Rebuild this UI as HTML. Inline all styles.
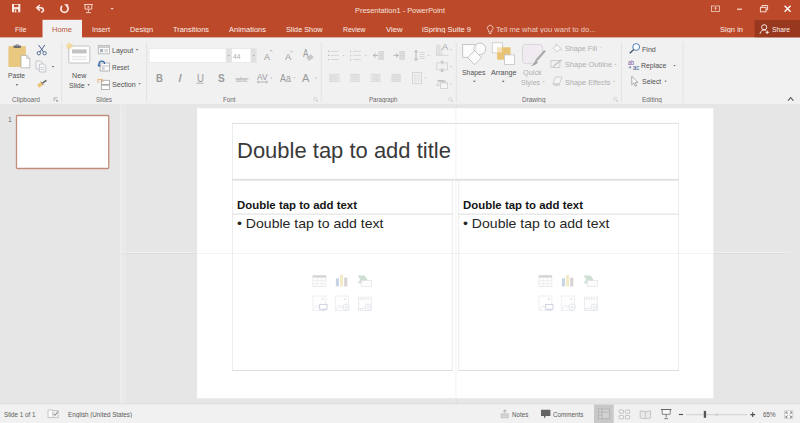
<!DOCTYPE html>
<html lang="en"><head><meta charset="utf-8"><title>Presentation1 - PowerPoint</title>
<style>
html,body{margin:0;padding:0}
body{width:800px;height:423px;overflow:hidden;position:relative;background:#e6e6e6;font-family:"Liberation Sans",sans-serif}
.t{position:absolute;white-space:nowrap;transform-origin:0 0;display:block}
.a{position:absolute}
svg{position:absolute;overflow:visible}

</style></head>
<body>
<svg id="bg" width="800" height="423" viewBox="0 0 800 423" style="left:0;top:0">
<rect x="0" y="0" width="800" height="423" fill="#e6e6e6"/>
<!-- title bar + tabs -->
<rect x="0" y="0" width="800" height="37.6" fill="#bc492a"/>
<rect x="754.6" y="20" width="45.4" height="17.6" fill="#98381f"/>
<!-- ribbon -->
<rect x="0" y="37.600" width="800" height="66.700" fill="#f1f1f1"/>
<rect x="0" y="103.900" width="800" height=".8" fill="#e4e4e4"/>
<rect x="42.5" y="19.8" width="39.5" height="18.4" fill="#f1f1f1"/>
<!-- group separators -->
<g fill="#e3e3e3">
<rect x="61.2" y="42" width="1" height="60"/><rect x="146.1" y="42" width="1" height="60"/><rect x="320.8" y="42" width="1" height="60"/>
<rect x="455.8" y="42" width="1" height="60"/><rect x="620.9" y="42" width="1" height="60"/><rect x="682.4" y="42" width="1" height="60"/>
</g>
<!-- font boxes -->
<rect x="149" y="48.4" width="77.2" height="14.1" fill="#fff" stroke="#e7e7e7" stroke-width=".8"/>
<rect x="231.6" y="48.4" width="19.3" height="14.1" fill="#fff" stroke="#e7e7e7" stroke-width=".8"/>
<!-- pane splitter -->
<rect x="120.4" y="104.4" width="5.8" height="300" fill="#e9e9e9"/>
<rect x="120.4" y="104.4" width="1" height="300" fill="#f0f0f0"/>
<!-- thumbnail -->
<rect x="16.5" y="115.5" width="92.2" height="53" rx=".8" fill="#fff" stroke="#c48d7b" stroke-width="1.3"/>
<!-- slide -->
<rect x="197.100" y="108.200" width="516.200" height="290" fill="#fff"/>
<!-- placeholders -->
<g fill="none" stroke="#ececec" stroke-width="1">
<path d="M232.500 123.400v247.100M678.500 123.400v247.100M452.300 180.100v190.400M458.700 180.100v190.400"/>
</g>
<g fill="none" stroke="#dedede" stroke-width="1">
<path d="M232 123.400h447M232 179.300h447M232 180.200h447M232 214.100h220.800M458.200 214.100h220.800M232 370.500h220.800M458.200 370.500h220.800"/>
</g>
<!-- guides -->
<rect x="121" y="252.3" width="669" height=".9" fill="#fff" opacity=".45"/>
<rect x="121" y="253.100" width="669" height=".9" fill="#5a5a5a" opacity=".08"/>
<rect x="454.700" y="104.4" width=".9" height="300" fill="#fff" opacity=".45"/>
<rect x="455.500" y="104.4" width=".9" height="300" fill="#5a5a5a" opacity=".08"/>
<!-- status bar -->
<rect x="0" y="403.500" width="800" height="1" fill="#dcdcdc"/>
<rect x="0" y="404.400" width="800" height="18.600" fill="#f1f1f1"/>
</svg>
<svg id="ico" width="800" height="423" viewBox="0 0 800 423" style="left:0;top:0" fill="none">
<!-- clipboard group -->
<g id="clip">
<rect x="8.4" y="46" width="17.4" height="21" rx="1" fill="#e9c880"/>
<path d="M13.600 48v-2.400h1.800a1.900 1.900 0 0 1 3.600 0h1.800v2.400z" fill="#6e6e6e"/>
<circle cx="17.200" cy="45.100" r=".700" fill="#f1f1f1"/>
<path d="M21 55.4h5.8l3 3v9.4h-8.8z" fill="#fff" stroke="#a9a9a9" stroke-width=".7"/>
<path d="M26.8 55.4v3h3" stroke="#a9a9a9" stroke-width=".7"/>
<!-- paste dd -->
<path d="M15.6 84.3l1.4 1.5l1.4-1.5z" fill="#555"/>
<!-- scissors -->
<path d="M38.6 45l5 7M44.8 45l-5 7" stroke="#4a6591" stroke-width="1"/>
<circle cx="38.8" cy="53.2" r="1.7" stroke="#4a6591" stroke-width=".9"/>
<circle cx="44.6" cy="53.2" r="1.7" stroke="#4a6591" stroke-width=".9"/>
<!-- copy (disabled) -->
<path d="M36 61h4.6l2 2v6h-6.600z" fill="#f6f6f6" stroke="#b9bec6" stroke-width=".8"/>
<path d="M39.4 64h4.400l2 2v6h-6.400z" fill="#f6f6f6" stroke="#b9bec6" stroke-width=".8"/>
<path d="M40.600 67.500h3.800M40.600 69.500h3.800" stroke="#c3c8cf" stroke-width=".7"/>
<path d="M51.800 66l1.300 1.400l1.300-1.400z" fill="#666"/>
<!-- format painter -->
<path d="M37 84.800l4.200-3l2.200 3l-4.200 3z" fill="#ecc777"/>
<path d="M42.600 83l3.800-2.600" stroke="#5a5a5a" stroke-width="1.500"/>
<path d="M41 81.600l2.400 3.400" stroke="#77705f" stroke-width=".9"/>
<!-- dialog launcher -->
<path d="M54 97.800h3.300M54 97.800v3.300" stroke="#8a8a8a" stroke-width=".6"/>
<path d="M55.600 99.400l1.900 1.900M57.500 99.900v1.400h-1.400" stroke="#7a7a7a" stroke-width=".6"/>
</g>
<!-- slides group -->
<g id="slides">
<rect x="68.800" y="46" width="21" height="17" rx="1.200" fill="#fdfdfd" stroke="#bdbdbd" stroke-width=".9"/>
<rect x="72" y="49.400" width="14.600" height="4" fill="#c2c2c2"/>
<path d="M72 56.800h14.600M72 59.400h14.600" stroke="#dedede" stroke-width=".9"/>
<path d="M69.400 42.400v7.200M65.800 46h7.200M66.900 43.500l5 5M71.900 43.500l-5 5" stroke="#f0c661" stroke-width=".8"/>
<circle cx="69.400" cy="46" r="1.500" fill="#f7dc93"/>
<path d="M87.300 84.300l1.300 1.400l1.300-1.400z" fill="#555"/>
<!-- layout -->
<rect x="98.300" y="45.400" width="11.200" height="8.400" fill="#fbfbfb" stroke="#b2b2b2" stroke-width=".8"/>
<path d="M98.300 47.100h11.200" stroke="#bcbcbc" stroke-width="1.400"/>
<rect x="100" y="49" width="3" height="3.200" fill="#aab3c0"/>
<rect x="104.400" y="49" width="3.600" height="3.200" fill="#d8d8d8"/>
<path d="M135.800 49l1.300 1.400l1.300-1.400z" fill="#666"/>
<!-- reset -->
<rect x="100.200" y="63" width="9.300" height="8" fill="#fbfbfb" stroke="#a5a5a5" stroke-width=".8"/>
<path d="M100.200 66h9.300" stroke="#b5b5b5" stroke-width=".8"/>
<rect x="102" y="67.200" width="2.600" height="2.600" fill="#c5ccd6"/>
<path d="M99 66.500v-2.500a2.800 2.800 0 0 1 5.600 0" stroke="#3f6fae" stroke-width="1.300"/>
<path d="M97.300 64.800l1.700 2.300l1.700-2.300z" fill="#3f6fae"/>
<!-- section -->
<rect x="101.500" y="80.300" width="8" height="9.200" fill="#fdfdfd" stroke="#a5a5a5" stroke-width=".8"/>
<path d="M101.500 84.800h8" stroke="#a8a8a8" stroke-width="1.600"/>
<path d="M98 79.400h5M98 79.400v3.600M100.500 81.300h3" stroke="#e6a45c" stroke-width=".8"/>
<path d="M138.300 83.200l1.300 1.400l1.300-1.400z" fill="#666"/>
</g>
<!-- drawing group -->
<g id="drawg">
<rect x="462.700" y="44.400" width="13.200" height="12.900" fill="#fcfcfc" stroke="#b9b9b9" stroke-width=".8"/>
<circle cx="479.800" cy="48.900" r="5.900" fill="#fcfcfc" stroke="#b9b9b9" stroke-width=".8"/>
<path d="M475.900 44.400v8" stroke="#d4d4d4" stroke-width=".7"/>
<path d="M474.600 50.600l7 7l-7 7l-7-7z" fill="#fcfcfc" stroke="#b9b9b9" stroke-width=".8"/>
<rect x="492.300" y="42.800" width="10.100" height="10" fill="#fcfcfc" stroke="#c4c4c4" stroke-width=".8"/>
<rect x="497.100" y="47.300" width="13.400" height="12.400" fill="#e8c373"/>
<rect x="492.700" y="43.200" width="9.300" height="9.200" fill="#fcfcfc" opacity=".55"/>
<rect x="504.500" y="54.900" width="10" height="9.600" fill="#fcfcfc" stroke="#c4c4c4" stroke-width=".8"/>
<!-- quick styles -->
<path d="M524.500 44.400h14.500a3.600 3.600 0 0 1 3.600 3.600v6l-7.500 9.700h-9a3.600 3.600 0 0 1-3.600-3.600v-12.100a3.600 3.600 0 0 1 2-3.600z" fill="#efebf0" stroke="#d2d0d4" stroke-width=".8"/>
<path d="M536.200 60.600l8.800-9.900" stroke="#ababab" stroke-width="2.200"/>
<path d="M529.800 65.800c2.600-.2 3.800-1.600 5.600-5.600l2.600 2c-2.600 3-5 4-8.200 3.600z" fill="#a2a2a2"/>
<path d="M473 80.800l1.300 1.400l1.300-1.400zM501.900 80.800l1.300 1.400l1.300-1.400z" fill="#555"/>
<path d="M542.600 81.200l1.100 1.200l1.100-1.200z" fill="#b5b5b5"/>
<!-- shape fill bucket -->
<g stroke="#c6c6c6" stroke-width=".8">
<path d="M553.200 48.200l4-3.500l3.600 3.800l-4 3.500z" fill="#f8f8f8"/>
<path d="M556 46v-2.200M561 48.800c.8 1.200.8 2 0 2.400"/>
<!-- shape outline -->
<rect x="550.900" y="60.400" width="9" height="7" fill="none"/>
<path d="M553 66.600l8.600-6.800" stroke="#bdbdbd" stroke-width="1.100"/>
<!-- shape effects -->
<path d="M555.500 77h6.500l-2.500 6.500h-6.500z" fill="#f4f4f4"/>
<path d="M553 83.500c.5 1.500 1 1.800 2 1.800h3.500c1 0 1.500-.8 1-1.800" fill="#d5d5d5"/>
</g>
<path d="M599.400 47.400l1.100 1.200l1.100-1.200zM614.600 64l1.100 1.200l1.100-1.200zM612.900 81l1.100 1.200l1.100-1.200z" fill="#c0c0c0"/>
<path d="M614 97.800h3.300M614 97.800v3.300" stroke="#c6c6c6" stroke-width=".6"/>
<path d="M615.600 99.400l1.900 1.900M617.500 99.900v1.400h-1.400" stroke="#c2c2c2" stroke-width=".6"/>
</g>
<!-- editing group -->
<g id="editg">
<circle cx="636.200" cy="47" r="3.400" fill="#fafcff" stroke="#4f7fb8" stroke-width="1"/>
<path d="M633.700 49.600l-3.900 3.600" stroke="#45566e" stroke-width="1.400"/>
<path d="M628.600 67.300h2.400M629.800 66.100l1.300 1.200l-1.300 1.200" stroke="#46679a" stroke-width=".6"/>
<path d="M631.800 76.200v8.600l2-1.900l1.500 3.500l1.300-.6l-1.500-3.400h2.800z" fill="#fff" stroke="#8a8a8a" stroke-width=".7"/>
<path d="M673.400 65l1.100 1.200l1.100-1.200zM664.500 80.800l1.100 1.200l1.100-1.200z" fill="#555"/>
<!-- collapse ribbon -->
<path d="M788 100.600l2.700-2.900l2.700 2.900" stroke="#5c5c5c" stroke-width="1.200"/>
</g>
<!-- font group -->
<g id="fontg">
<rect x="226.200" y="48.300" width="5.300" height="14.300" fill="#e2e2e2"/>
<rect x="250.900" y="48.300" width="5.700" height="14.300" fill="#e0e0e0"/>
<path d="M227.700 55l1.100 1.200l1.100-1.200zM252.600 55l1.100 1.200l1.100-1.200z" fill="#a4a4a4"/>
<!-- grow/shrink carets -->
<path d="M270 51.400l1.200-1.100l1.200 1.100" stroke="#9a9a9a" stroke-width=".7"/>
<path d="M290.400 51l1.100 1.100l1.100-1.100" stroke="#9a9a9a" stroke-width=".7"/>
<!-- eraser -->
<path d="M306.300 57.800l4.800-3.600l2.800 3l-4.800 3.800z" fill="#c9c9c9"/>
<!-- underline of U -->
<path d="M196.500 83.200h7" stroke="#a2a2a2" stroke-width=".8"/>
<!-- abc strike -->
<path d="M235 79.100h13.600" stroke="#b4b4b4" stroke-width=".7"/>
<!-- AV arrow -->
<path d="M257.400 82h10M258.600 80.900l-1.300 1.100l1.300 1.100M266.200 80.900l1.300 1.100l-1.300 1.100" stroke="#9a9a9a" stroke-width=".7"/>
<path d="M270.300 77.500l1.100 1.200l1.100-1.200zM293.200 77.500l1.100 1.200l1.100-1.200zM315 77.500l1.100 1.200l1.100-1.200z" fill="#b0b0b0"/>
<path d="M314 97.800h3.300M314 97.800v3.300" stroke="#c2c2c2" stroke-width=".6"/>
<path d="M315.600 99.400l1.900 1.900M317.500 99.900v1.400h-1.400" stroke="#bcbcbc" stroke-width=".6"/>
</g>
<!-- paragraph group (disabled) -->
<g id="parag" stroke="#d2d2d2" stroke-width=".8">
<!-- bullets -->
<path d="M330.800 51.300h8M330.800 55.400h8M330.800 59.500h8"/>
<path d="M328 51.300h1.300M328 55.400h1.300M328 59.500h1.300" stroke="#b9b9b9" stroke-width="1.200"/>
<!-- numbering -->
<path d="M353 51.300h8M353 55.400h8M353 59.500h8"/>
<path d="M350.600 50.500v1.800M350.600 54.500v1.800M350.600 58.600v1.800" stroke="#bdbdbd" stroke-width=".9"/>
<!-- dec indent -->
<rect x="378.200" y="51" width="5.900" height="8.600" fill="#e0e0e0" stroke="none"/>
<path d="M378.600 51.600h5.300M378.600 53.500h5.300M378.600 55.400h5.300M378.600 57.300h5.300M378.600 59.200h5.300"/>
<path d="M377.800 55.400h-4.400M375.600 53.300l-2.300 2.100l2.300 2.100" stroke="#b5b5b5" stroke-width="1"/>
<!-- inc indent -->
<rect x="399.200" y="51" width="5.900" height="8.600" fill="#e0e0e0" stroke="none"/>
<path d="M399.600 51.600h5.300M399.600 53.500h5.300M399.600 55.400h5.300M399.600 57.300h5.300M399.600 59.200h5.300"/>
<path d="M393.600 55.400h4.600M396 53.300l2.300 2.100l-2.300 2.100" stroke="#b5b5b5" stroke-width="1"/>
<!-- line spacing -->
<path d="M419.600 52.500h5M419.600 54.500h5M419.600 56.500h5M419.600 58.500h5"/>
<path d="M416 50.500v9.800M414.300 52.300l1.700-1.900l1.700 1.900M414.300 58.500l1.700 1.900l1.700-1.900" stroke="#b3b3b3" stroke-width="1"/>
<!-- align L C R J -->
<rect x="329" y="74" width="10.600" height="7.800" fill="#e6e6e6" stroke="none"/><rect x="350" y="74" width="10" height="7.800" fill="#e6e6e6" stroke="none"/><rect x="370.400" y="74" width="10" height="7.800" fill="#e6e6e6" stroke="none"/><rect x="391.400" y="74" width="9.500" height="7.800" fill="#e4e4e4" stroke="none"/>
<path d="M329 74.400h10.600M329 76.200h7.600M329 78h10.600M329 79.800h7.600M329 81.500h10.600" stroke="#d8d8d8"/>
<path d="M350 74.400h10M351.400 76.200h7.200M350 78h10M351.400 79.800h7.200M350 81.500h10" stroke="#d8d8d8"/>
<path d="M370.400 74.400h10M373.400 76.200h7M370.400 78h10M373.400 79.800h7M370.400 81.500h10" stroke="#d8d8d8"/>
<path d="M391.400 74.400h9.500M391.400 76.200h9.500M391.400 78h9.500M391.400 79.800h9.500M391.400 81.500h9.500" stroke="#d8d8d8"/>
<!-- columns -->
<rect x="412.600" y="72.400" width="8.800" height="11.300" stroke="#cfcfcf"/>
<path d="M414.200 75h2.300M417.600 75h2.300M414.200 77h2.300M417.600 77h2.300M414.200 79h2.300M417.600 79h2.300M414.200 81h2.300M417.600 81h2.300" stroke="#d6d6d6"/>
<!-- text direction -->
<path d="M436.600 44.500v10.600M438.200 44.500v10.600M439.800 44.500v10.600M441.400 48v7.100M436 55.300h12.600" stroke="#cfcfcf"/>
<!-- align text -->
<rect x="436.800" y="62.800" width="10.600" height="7" stroke="#cfcfcf"/>
<path d="M442.100 61v3.400M442.100 68.200v3.600M440.600 62.400l1.500-1.600l1.500 1.600M440.600 70.400l1.500 1.600l1.500-1.600" stroke="#b8b8b8" stroke-width=".9"/>
<!-- smartart convert -->
<path d="M436.600 80h7.500l2.600 2.300h-7.500z" fill="#c5c5c5" stroke="none"/>
<path d="M438.500 82.300l-1.900 3h4" stroke="#c9c9c9"/>
<rect x="440.600" y="83" width="7" height="5.400" fill="#f6f6f6" stroke="#cdcdcd"/>
<!-- dds -->
<path d="M342.500 55l1.100 1.200l1.100-1.200zM364.800 55l1.100 1.200l1.100-1.200zM427.400 55l1.100 1.200l1.100-1.200zM424.400 77.500l1.100 1.200l1.100-1.200zM450 49l1.100 1.200l1.100-1.200zM450 66l1.100 1.200l1.100-1.200zM450 83.500l1.100 1.200l1.100-1.200z" fill="#c4c4c4" stroke="none"/>
<path d="M449 97.800h3.300M449 97.800v3.300" stroke="#c6c6c6" stroke-width=".6"/>
<path d="M450.600 99.400l1.900 1.900M452.500 99.900v1.400h-1.400" stroke="#c2c2c2" stroke-width=".6"/>
</g>
<!-- placeholder icons -->
<g transform="translate(0 0)" stroke-width=".7" opacity=".72">
<!-- table -->
<rect x="312.9" y="275.600" width="13" height="11" fill="#fdfdfd" stroke="#dcdcdc"/>
<rect x="312.900" y="275.400" width="13" height="2.200" fill="#c2c2c2"/>
<path d="M317.200 277.600v9M321.600 277.600v9M312.900 280.600h13M312.900 283.600h13" stroke="#e2e2e2"/>
<!-- chart -->
<rect x="335.900" y="278.400" width="3.100" height="8" fill="#b3c3da"/>
<rect x="340" y="274.800" width="3.100" height="11.600" fill="#efe2b4"/>
<rect x="344.200" y="277.600" width="3.100" height="8.800" fill="#c9c1c4"/>
<!-- smartart -->
<path d="M357.600 275.500h7l2.800 3.900l-2.800 3.900h-7l2.600-3.900z" fill="#bcd3c7"/>
<rect x="361.300" y="280.600" width="10" height="6" fill="#fcfcfc" stroke="#d6d6d6"/>
<!-- picture -->
<rect x="312.900" y="296" width="13" height="14.400" fill="#fefefe" stroke="#e0e0e4"/>
<rect x="321.800" y="298.300" width="1.800" height="1.600" fill="#d8d8de"/>
<path d="M313.400 309.500l3.600-4.200l2 2.200l1.800-1.800" stroke="#d3dae6" fill="none"/>
<rect x="319.600" y="304.400" width="7.400" height="4.800" fill="#fff" stroke="#b3bfd2" stroke-width=".9"/>
<path d="M321.800 310h3" stroke="#b3bfd2" stroke-width=".8"/>
<!-- online picture -->
<rect x="335.200" y="296" width="13.300" height="14.400" fill="#fefefe" stroke="#e0e0e4"/>
<rect x="344.300" y="298.300" width="1.800" height="1.600" fill="#d8d8de"/>
<path d="M335.800 309.800l3.400-4.600l2 2.400l2-2.200" stroke="#d9d3e4" fill="none"/>
<circle cx="346.200" cy="307.200" r="3.300" fill="#fff" stroke="#ccd3de"/>
<path d="M346.200 303.900v6.600M342.900 307.200h6.600" stroke="#d5dbe4" fill="none"/>
<!-- video -->
<rect x="358.500" y="297.200" width="12.800" height="13.200" fill="#fefefe" stroke="#dcdce0"/>
<path d="M359.600 299h10.800" stroke="#c5c5cc" stroke-width="1.200" stroke-dasharray="1.400 1.200"/>
<path d="M359.600 308.600h5" stroke="#c9c9d0" stroke-width="1.200" stroke-dasharray="1.400 1.200"/>
<circle cx="368" cy="307.200" r="3.300" fill="#fff" stroke="#ccd3de"/>
<path d="M368 303.900v6.600M364.700 307.200h6.600" stroke="#d5dbe4" fill="none"/>
</g>
<g transform="translate(226 0)" stroke-width=".7" opacity=".72">
<!-- table -->
<rect x="312.9" y="275.600" width="13" height="11" fill="#fdfdfd" stroke="#dcdcdc"/>
<rect x="312.900" y="275.400" width="13" height="2.200" fill="#c2c2c2"/>
<path d="M317.200 277.600v9M321.600 277.600v9M312.900 280.600h13M312.900 283.600h13" stroke="#e2e2e2"/>
<!-- chart -->
<rect x="335.900" y="278.400" width="3.100" height="8" fill="#b3c3da"/>
<rect x="340" y="274.800" width="3.100" height="11.600" fill="#efe2b4"/>
<rect x="344.200" y="277.600" width="3.100" height="8.800" fill="#c9c1c4"/>
<!-- smartart -->
<path d="M357.600 275.500h7l2.800 3.900l-2.800 3.900h-7l2.600-3.900z" fill="#bcd3c7"/>
<rect x="361.300" y="280.600" width="10" height="6" fill="#fcfcfc" stroke="#d6d6d6"/>
<!-- picture -->
<rect x="312.900" y="296" width="13" height="14.400" fill="#fefefe" stroke="#e0e0e4"/>
<rect x="321.800" y="298.300" width="1.800" height="1.600" fill="#d8d8de"/>
<path d="M313.400 309.500l3.600-4.200l2 2.200l1.800-1.800" stroke="#d3dae6" fill="none"/>
<rect x="319.600" y="304.400" width="7.400" height="4.800" fill="#fff" stroke="#b3bfd2" stroke-width=".9"/>
<path d="M321.800 310h3" stroke="#b3bfd2" stroke-width=".8"/>
<!-- online picture -->
<rect x="335.200" y="296" width="13.300" height="14.400" fill="#fefefe" stroke="#e0e0e4"/>
<rect x="344.300" y="298.300" width="1.800" height="1.600" fill="#d8d8de"/>
<path d="M335.800 309.800l3.400-4.600l2 2.400l2-2.200" stroke="#d9d3e4" fill="none"/>
<circle cx="346.200" cy="307.200" r="3.300" fill="#fff" stroke="#ccd3de"/>
<path d="M346.200 303.900v6.600M342.900 307.200h6.600" stroke="#d5dbe4" fill="none"/>
<!-- video -->
<rect x="358.500" y="297.200" width="12.800" height="13.200" fill="#fefefe" stroke="#dcdce0"/>
<path d="M359.600 299h10.800" stroke="#c5c5cc" stroke-width="1.200" stroke-dasharray="1.400 1.200"/>
<path d="M359.600 308.600h5" stroke="#c9c9d0" stroke-width="1.200" stroke-dasharray="1.400 1.200"/>
<circle cx="368" cy="307.200" r="3.300" fill="#fff" stroke="#ccd3de"/>
<path d="M368 303.900v6.600M364.700 307.200h6.600" stroke="#d5dbe4" fill="none"/>
</g>
<!-- status bar -->
<g id="statusg">
<rect x="594" y="404.500" width="19.700" height="18.500" fill="#c8c8c8"/>
<!-- spell check -->
<path d="M48 410h4.800v7.600h-4.800z" fill="#fafafa" stroke="#b5b5b5" stroke-width=".7"/>
<path d="M52.800 410.600h5.400v7h-5.400" stroke="#b5b5b5" stroke-width=".7"/>
<path d="M53.600 413.600l1.500 1.800l2.800-4" stroke="#777" stroke-width=".9"/>
<!-- notes -->
<rect x="500.800" y="413.200" width="8" height="5" fill="#c9c9c9"/>
<path d="M502.200 414.800h5.200M502.200 416.600h5.200" stroke="#e6e6e6" stroke-width=".6"/>
<path d="M504.800 412.800v-2.600M503.200 411.600l1.600-1.800l1.600 1.800" stroke="#a8a8a8" stroke-width=".9"/>
<!-- comments -->
<path d="M541 409.800h9.400v6.200h-4.400l-2 2.400v-2.400h-3z" fill="#646464"/>
<!-- normal view icon -->
<rect x="598.600" y="409" width="11" height="9.800" fill="#d2d2d2" stroke="#aeaeae" stroke-width=".8"/>
<path d="M602 409v9.800M602 412.200h7.600M598.600 412.200h3.400M598.600 415.400h3.400" stroke="#aeaeae" stroke-width=".7"/>
<!-- slide sorter -->
<g stroke="#b4b4b4" stroke-width=".8" fill="#f7f7f7">
<rect x="619.200" y="410" width="4.300" height="3.200" rx=".6"/><rect x="625.400" y="410" width="4.300" height="3.200" rx=".6"/>
<rect x="619.200" y="415.600" width="4.300" height="3.200" rx=".6"/><rect x="625.400" y="415.600" width="4.300" height="3.200" rx=".6"/>
</g>
<!-- reading view -->
<path d="M640.200 410.800l5.200 .8l5.200-.8v7.200l-5.200 .6l-5.200-.6z" fill="#e9e9e9" stroke="#bdbdbd" stroke-width=".8"/>
<path d="M645.400 411.400v7" stroke="#bdbdbd" stroke-width=".8"/>
<!-- slideshow -->
<path d="M661 409.600h10.400" stroke="#5e5e5e" stroke-width="1.100"/>
<path d="M662.200 410v4.300h8v-4.300" stroke="#6e6e6e" stroke-width=".8" fill="#f8f8f8"/>
<path d="M666.200 414.300v3M664.400 418.600h3.600" stroke="#6e6e6e" stroke-width=".9"/>
<!-- zoom slider -->
<path d="M678.900 414.500h4.200" stroke="#4c4c4c" stroke-width="1.100"/>
<path d="M686 414.700h61.500" stroke="#c2c2c2" stroke-width=".7"/>
<path d="M716.800 413.600v2.200" stroke="#b5b5b5" stroke-width=".8"/>
<rect x="703.800" y="410.900" width="2.300" height="6.900" fill="#555"/>
<path d="M750.300 414.600h4.800M752.700 412.200v4.800" stroke="#4c4c4c" stroke-width="1.100"/>
<!-- fit to window -->
<rect x="784.600" y="410.800" width="8.300" height="7.800" fill="#fafafa" stroke="#c4c4c4" stroke-width=".7"/>
<path d="M786 412.200l1.900 1.800M791.500 412.200l-1.900 1.800M786 417.200l1.900-1.800M791.500 417.200l-1.900-1.800" stroke="#6a6a6a" stroke-width=".8"/>
<path d="M785.800 413.600v-1.600h1.600M791.700 413.600v-1.600h-1.600M785.800 415.800v1.600h1.600M791.700 415.800v1.600h-1.600" stroke="#6a6a6a" stroke-width=".7"/>
</g>
<!-- titlebar: save -->
<g id="tb-icons">
<path d="M12 4h8.3v8.2h-8.3z" fill="#fbe9e3"/>
<rect x="14" y="4.700" width="4.300" height="2.400" fill="#bc492a"/>
<rect x="14.2" y="9.3" width="3.9" height="2.9" fill="#bc492a"/>
<rect x="15" y="9.9" width="1.2" height="2.3" fill="#fbe9e3"/>
<!-- undo -->
<path d="M37.400 7.800h3.400a3 2.300 0 0 1 .400 4.500" stroke="#fbe9e3" stroke-width="1.600"/>
<path d="M39.800 5l-3 2.800l3 2.800" stroke="#fbe9e3" stroke-width="1.600"/>
<!-- redo -->
<path d="M66.800 6a3.600 3.600 0 1 1-4.600 0" stroke="#fbe9e3" stroke-width="1.700"/>
<path d="M64.600 4.400h3.300v3.300z" fill="#fbe9e3" stroke="#fbe9e3" stroke-width=".5"/>
<!-- present from start -->
<path d="M84 4.5h8.8M85 4.5v4.6h6.8v-4.6M88.4 9.1v2.6M86 12.6h4.8" stroke="#f3d3c8" stroke-width="1"/>
<path d="M87.6 5.6l2.2 1.3l-2.2 1.3z" fill="#f3d3c8"/>
<!-- customize qat -->
<path d="M110.600 8l1.500 1.700l1.500-1.700z" fill="#f6ddd5"/>
<!-- ribbon display options -->
<rect x="711.5" y="6" width="8" height="5.4" stroke="#f0cfc4" stroke-width=".8"/>
<path d="M715.5 10.2v-2.8M714.2 8.6l1.3-1.4l1.3 1.4" stroke="#f0cfc4" stroke-width=".8"/>
<!-- minimize -->
<path d="M737 9.2h5" stroke="#fbe9e3" stroke-width="1.1"/>
<!-- restore -->
<rect x="760.4" y="7.4" width="5.6" height="4.4" stroke="#f6dcd3" stroke-width="1"/>
<path d="M762 7.2v-1.7h5.6v4.2h-1.5" stroke="#f6dcd3" stroke-width="1"/>
<!-- close -->
<path d="M784.6 5.8l6 6M790.6 5.8l-6 6" stroke="#fff" stroke-width="1.3"/>
<!-- lightbulb -->
<path d="M488.600 30.400a2.800 2.800 0 1 1 3.200 0v1.600h-3.200zM489 33.500h2.400" stroke="#f3d6cc" stroke-width=".8"/>
<!-- share person -->
<circle cx="764.2" cy="27.3" r="2.6" stroke="#fbe9e3" stroke-width="1"/>
<path d="M760 33.8a4.3 4.3 0 0 1 6-3.6" stroke="#fbe9e3" stroke-width="1"/>
<path d="M767.2 30.6v3.4M765.5 32.3h3.4" stroke="#fbe9e3" stroke-width="1"/>
</g>
</svg>

<span class="t" id="t0" style="left:354.5px;top:7px;font-size:28.8px;line-height:28.8px;color:#f6e3dd;transform:scale(0.2567,0.25);">Presentation1 - PowerPoint</span>
<span class="t" id="t1" style="left:14.5px;top:25px;font-size:30.4px;line-height:30.4px;color:#fbeee9;transform:scale(0.2348,0.25);">File</span>
<span class="t" id="t2" style="left:52px;top:25px;font-size:30.4px;line-height:30.4px;color:#b7573e;transform:scale(0.2467,0.25);">Home</span>
<span class="t" id="t3" style="left:92px;top:25px;font-size:30.4px;line-height:30.4px;color:#fbeee9;transform:scale(0.2368,0.25);">Insert</span>
<span class="t" id="t4" style="left:130px;top:25px;font-size:30.4px;line-height:30.4px;color:#fbeee9;transform:scale(0.2431,0.25);">Design</span>
<span class="t" id="t5" style="left:173px;top:25px;font-size:30.4px;line-height:30.4px;color:#fbeee9;transform:scale(0.2440,0.25);">Transitions</span>
<span class="t" id="t6" style="left:229px;top:25px;font-size:30.4px;line-height:30.4px;color:#fbeee9;transform:scale(0.2461,0.25);">Animations</span>
<span class="t" id="t7" style="left:286px;top:25px;font-size:30.4px;line-height:30.4px;color:#fbeee9;transform:scale(0.2401,0.25);">Slide Show</span>
<span class="t" id="t8" style="left:343px;top:25px;font-size:30.4px;line-height:30.4px;color:#fbeee9;transform:scale(0.2258,0.25);">Review</span>
<span class="t" id="t9" style="left:385.5px;top:25px;font-size:30.4px;line-height:30.4px;color:#fbeee9;transform:scale(0.2526,0.25);">View</span>
<span class="t" id="t10" style="left:422px;top:25px;font-size:30.4px;line-height:30.4px;color:#fbeee9;transform:scale(0.2479,0.25);">iSpring Suite 9</span>
<span class="t" id="t11" style="left:496px;top:25px;font-size:30.4px;line-height:30.4px;color:#eccdc3;transform:scale(0.2485,0.25);">Tell me what you want to do...</span>
<span class="t" id="t12" style="left:720px;top:25px;font-size:30.4px;line-height:30.4px;color:#fbeee9;transform:scale(0.2475,0.25);">Sign in</span>
<span class="t" id="t13" style="left:772px;top:25px;font-size:30.4px;line-height:30.4px;color:#fbeee9;transform:scale(0.2219,0.25);">Share</span>
<span class="t" id="t14" style="left:8px;top:72px;font-size:29.6px;line-height:29.6px;color:#505050;transform:scale(0.2246,0.25);">Paste</span>
<span class="t" id="t15" style="left:71.9px;top:72px;font-size:29.6px;line-height:29.6px;color:#505050;transform:scale(0.2415,0.25);">New</span>
<span class="t" id="t16" style="left:68.5px;top:82px;font-size:29.6px;line-height:29.6px;color:#505050;transform:scale(0.2386,0.25);">Slide</span>
<span class="t" id="t17" style="left:111.8px;top:47px;font-size:29.6px;line-height:29.6px;color:#505050;transform:scale(0.2375,0.25);">Layout</span>
<span class="t" id="t18" style="left:111.8px;top:64px;font-size:29.6px;line-height:29.6px;color:#505050;transform:scale(0.2199,0.25);">Reset</span>
<span class="t" id="t19" style="left:111.8px;top:81px;font-size:29.6px;line-height:29.6px;color:#505050;transform:scale(0.2411,0.25);">Section</span>
<span class="t" id="t20" style="left:12px;top:96px;font-size:26.4px;line-height:26.4px;color:#6a6a6a;transform:scale(0.2479,0.25);">Clipboard</span>
<span class="t" id="t21" style="left:96px;top:96px;font-size:26.4px;line-height:26.4px;color:#6a6a6a;transform:scale(0.2226,0.25);">Slides</span>
<span class="t" id="t22" style="left:222.5px;top:96px;font-size:26.4px;line-height:26.4px;color:#6a6a6a;transform:scale(0.2367,0.25);">Font</span>
<span class="t" id="t23" style="left:369px;top:96px;font-size:26.4px;line-height:26.4px;color:#6a6a6a;transform:scale(0.2312,0.25);">Paragraph</span>
<span class="t" id="t24" style="left:522px;top:96px;font-size:26.4px;line-height:26.4px;color:#6a6a6a;transform:scale(0.2427,0.25);">Drawing</span>
<span class="t" id="t25" style="left:642px;top:96px;font-size:26.4px;line-height:26.4px;color:#6a6a6a;transform:scale(0.2478,0.25);">Editing</span>
<span class="t" id="t26" style="left:462.2px;top:69px;font-size:29.6px;line-height:29.6px;color:#505050;transform:scale(0.2331,0.25);">Shapes</span>
<span class="t" id="t27" style="left:490.6px;top:69px;font-size:29.6px;line-height:29.6px;color:#505050;transform:scale(0.2431,0.25);">Arrange</span>
<span class="t" id="t28" style="left:523.1px;top:69px;font-size:29.6px;line-height:29.6px;color:#aeaeae;transform:scale(0.2485,0.25);">Quick</span>
<span class="t" id="t29" style="left:520.7px;top:79px;font-size:29.6px;line-height:29.6px;color:#aeaeae;transform:scale(0.2358,0.25);">Styles</span>
<span class="t" id="t30" style="left:564.6px;top:45px;font-size:29.6px;line-height:29.6px;color:#aeaeae;transform:scale(0.2431,0.25);">Shape Fill</span>
<span class="t" id="t31" style="left:564.6px;top:61px;font-size:29.6px;line-height:29.6px;color:#aeaeae;transform:scale(0.2511,0.25);">Shape Outline</span>
<span class="t" id="t32" style="left:564.6px;top:79px;font-size:29.6px;line-height:29.6px;color:#aeaeae;transform:scale(0.2471,0.25);">Shape Effects</span>
<span class="t" id="t33" style="left:642.1px;top:46px;font-size:29.6px;line-height:29.6px;color:#505050;transform:scale(0.2397,0.25);">Find</span>
<span class="t" id="t34" style="left:641px;top:62px;font-size:29.6px;line-height:29.6px;color:#505050;transform:scale(0.2330,0.25);">Replace</span>
<span class="t" id="t35" style="left:642.1px;top:78px;font-size:29.6px;line-height:29.6px;color:#505050;transform:scale(0.2347,0.25);">Select</span>
<span class="t" id="t36" style="left:232.7px;top:53px;font-size:28.8px;line-height:28.8px;color:#b0b0b0;transform:scale(0.2373,0.25);">44</span>
<span class="t" id="t37" style="left:155.5px;top:72px;font-size:44.8px;line-height:44.8px;color:#9a9a9a;font-weight:bold;transform:scale(0.2132,0.25);">B</span>
<span class="t" id="t38" style="left:177.5px;top:72px;font-size:44.8px;line-height:44.8px;color:#9a9a9a;font-style:italic;transform:scale(0.3212,0.25);">I</span>
<span class="t" id="t39" style="left:196.5px;top:72px;font-size:44.8px;line-height:44.8px;color:#9a9a9a;transform:scale(0.2163,0.25);">U</span>
<span class="t" id="t40" style="left:217.8px;top:72px;font-size:44.8px;line-height:44.8px;color:#9a9a9a;font-weight:bold;transform:scale(0.2242,0.25);">S</span>
<span class="t" id="t41" style="left:236px;top:75px;font-size:30.4px;line-height:30.4px;color:#b0b0b0;transform:scale(0.2347,0.25);">abc</span>
<span class="t" id="t42" style="left:257px;top:72px;font-size:37.6px;line-height:37.6px;color:#9a9a9a;transform:scale(0.2239,0.25);">AV</span>
<span class="t" id="t43" style="left:279.7px;top:73px;font-size:41.6px;line-height:41.6px;color:#9a9a9a;transform:scale(0.2122,0.25);">Aa</span>
<span class="t" id="t44" style="left:302px;top:72px;font-size:45.6px;line-height:45.6px;color:#9a9a9a;transform:scale(0.2432,0.25);">A</span>
<span class="t" id="t45" style="left:264px;top:52px;font-size:38.4px;line-height:38.4px;color:#9a9a9a;transform:scale(0.2343,0.25);">A</span>
<span class="t" id="t46" style="left:284.8px;top:53px;font-size:34.4px;line-height:34.4px;color:#9a9a9a;transform:scale(0.2701,0.25);">A</span>
<span class="t" id="t47" style="left:303.3px;top:48px;font-size:40px;line-height:40px;color:#9a9a9a;transform:scale(0.1986,0.25);">A</span>
<span class="t" id="t48" style="left:4.4px;top:411px;font-size:26.8px;line-height:26.8px;color:#5a5a5a;transform:scale(0.2349,0.25);">Slide 1 of 1</span>
<span class="t" id="t49" style="left:68.2px;top:411px;font-size:26.8px;line-height:26.8px;color:#5a5a5a;transform:scale(0.2335,0.25);">English (United States)</span>
<span class="t" id="t50" style="left:511.9px;top:411px;font-size:26.8px;line-height:26.8px;color:#5a5a5a;transform:scale(0.2328,0.25);">Notes</span>
<span class="t" id="t51" style="left:552.7px;top:411px;font-size:26.8px;line-height:26.8px;color:#5a5a5a;transform:scale(0.2354,0.25);">Comments</span>
<span class="t" id="t52" style="left:763.1px;top:411px;font-size:26.8px;line-height:26.8px;color:#5a5a5a;transform:scale(0.2349,0.25);">65%</span>
<span class="t" id="t53" style="left:8px;top:115px;font-size:32px;line-height:32px;color:#6a6a6a;transform:scale(0.2135,0.25);">1</span>
<span class="t" id="t54" style="left:236.6px;top:139px;font-size:90.4px;line-height:90.4px;color:#3a3a3a;transform:scale(0.2432,0.25);">Double tap to add title</span>
<span class="t" id="t55" style="left:237px;top:199px;font-size:44.8px;line-height:44.8px;color:#141414;font-weight:bold;transform:scale(0.2551,0.25);">Double tap to add text</span>
<span class="t" id="t56" style="left:463px;top:199px;font-size:44.8px;line-height:44.8px;color:#141414;font-weight:bold;transform:scale(0.2551,0.25);">Double tap to add text</span>
<span class="t" id="t57" style="left:237px;top:217px;font-size:53.6px;line-height:53.6px;color:#262626;transform:scale(0.2625,0.25);">• Double tap to add text</span>
<span class="t" id="t58" style="left:463px;top:217px;font-size:53.6px;line-height:53.6px;color:#262626;transform:scale(0.2625,0.25);">• Double tap to add text</span>
<span class="t" id="t59" style="left:627.8px;top:60px;font-size:25.6px;line-height:25.6px;color:#7a50a6;transform:scale(0.2108,0.25);">ab</span>
<span class="t" id="t60" style="left:633px;top:65px;font-size:25.6px;line-height:25.6px;color:#46598c;transform:scale(0.2294,0.25);">ac</span>
<span class="t" id="t61" style="left:442px;top:43px;font-size:34.4px;line-height:34.4px;color:#a9a9a9;transform:scale(0.2701,0.25);">A</span>
</body></html>
